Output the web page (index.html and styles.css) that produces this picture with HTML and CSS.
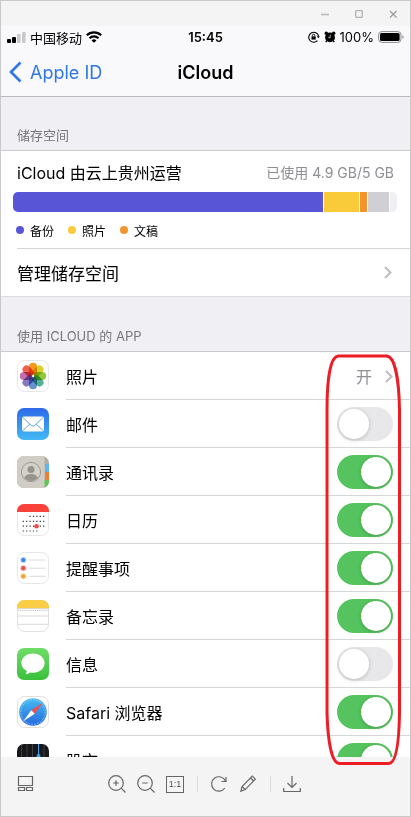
FILE: index.html
```html
<!DOCTYPE html>
<html lang="zh-CN">
<head>
    <meta charset="UTF-8">
    <meta name="viewport" content="width=device-width, initial-scale=1.0">
    <title>iCloud</title>
    <link rel="stylesheet" href="styles.css">
</head>
<body>
    <div class="window">
        <div class="titlebar">
            <button aria-label="最小化"><svg width="10" height="10" viewBox="0 0 10 10"><path d="M1 5.5h8" stroke="#b9b9b9" stroke-width="1.6"/></svg></button>
            <button aria-label="最大化"><svg width="10" height="10" viewBox="0 0 10 10"><rect x="1.7" y="1.7" width="6.6" height="6.6" rx="0.6" fill="none" stroke="#b3b3b3" stroke-width="1.3"/></svg></button>
            <button aria-label="关闭"><svg width="10" height="10" viewBox="0 0 10 10"><path d="M2 2l6.5 6.5M8.5 2L2 8.5" stroke="#999" stroke-width="1.1"/></svg></button>
        </div>

        <main class="screen">
            <div class="statusbar">
                <div class="status-left">
                    <svg width="19" height="12" viewBox="0 0 19 12">
                        <rect x="0" y="8" width="4" height="4" rx="1"/>
                        <rect x="5" y="6" width="4" height="6" rx="1"/>
                        <rect x="10" y="3" width="3.6" height="9" rx="1" fill="#c9c9cc"/>
                        <rect x="15" y="1" width="3.6" height="11" rx="1" fill="#c9c9cc"/>
                    </svg>
                    <span class="carrier">中国移动</span>
                    <svg width="16" height="12" viewBox="0 0 16 12" fill="none" stroke="#000" stroke-width="2.1">
                        <path d="M0.8 4.3a10.3 10.3 0 0 1 14.4 0"/>
                        <path d="M3.5 7.2a6.5 6.5 0 0 1 9 0"/>
                        <path d="M8 11.8L5.6 9.4a3.5 3.5 0 0 1 4.8 0z" fill="#000" stroke="none"/>
                    </svg>
                </div>
                <span class="time">15:45</span>
                <div class="status-right">
                    <svg width="12" height="12" viewBox="0 0 12 12" fill="none" stroke="#000" stroke-width="1.1">
                        <path d="M9.4 9.7A5 5 0 1 1 10.6 5"/>
                        <path d="M8.6 5.2h3.3l-1.6 2.1z" fill="#000" stroke="none"/>
                        <rect x="3.5" y="5.4" width="4.2" height="3.2" fill="#000" stroke="none"/>
                        <path d="M4.4 5.5V4.4a1.2 1.2 0 0 1 2.4 0v1.1" stroke-width="0.9"/>
                    </svg>
                    <svg width="12" height="12" viewBox="0 0 12 12">
                        <circle cx="6" cy="6.4" r="4.9"/>
                        <circle cx="2.3" cy="2.2" r="1.7"/>
                        <circle cx="9.7" cy="2.2" r="1.7"/>
                        <path d="M2.8 9.6l-1 1.5M9.2 9.6l1 1.5" stroke="#000" stroke-width="1.4"/>
                        <path d="M6.2 3.8v2.800H4.200" fill="none" stroke="#fff" stroke-width="0.7"/>
                    </svg>
                    <span class="percent">100%</span>
                    <svg width="26" height="12" viewBox="0 0 26 12">
                        <rect x="0.6" y="0.6" width="22.4" height="10.8" rx="3.2" fill="none" stroke="#8b8b8e"/>
                        <rect x="2" y="2" width="19.6" height="8" rx="1.5"/>
                        <path d="M24.4 4.3v3.4a1.8 1.8 0 0 0 0-3.4z" fill="#8b8b8e"/>
                    </svg>
                </div>
            </div>

            <header class="navbar">
                <a href="#" class="back">
                    <svg width="13" height="22" viewBox="0 0 13 22"><path d="M11.5 1.5L2 11l9.5 9.5" fill="none" stroke="#2f78e4" stroke-width="2.7"/></svg>
                    Apple ID
                </a>
                <h1>iCloud</h1>
            </header>

            <h2 class="section-title">储存空间</h2>
            <section class="storage">
                <div class="storage-head">
                    <span class="plan">iCloud 由云上贵州运营</span>
                    <span class="used">已使用 4.9 GB/5 GB</span>
                </div>
                <div class="usage">
                    <span class="backup" style="flex-grow: 310"></span>
                    <span class="photos" style="flex-grow: 35"></span>
                    <span class="docs" style="flex-grow: 7"></span>
                    <span class="other" style="flex-grow: 21"></span>
                    <span class="free" style="flex-grow: 7"></span>
                </div>
                <ul class="legend">
                    <li><i class="backup"></i>备份</li>
                    <li><i class="photos"></i>照片</li>
                    <li><i class="docs"></i>文稿</li>
                </ul>
                <a href="#" class="manage">
                    管理储存空间
                    <svg class="chevron" width="8" height="13" viewBox="0 0 8 13"><path d="M1 1l5.5 5.5L1 12"/></svg>
                </a>
            </section>

            <h2 class="section-title apps-title">使用 ICLOUD 的 APP</h2>
            <section class="apps">
                <a href="#" class="row">
                    <svg class="icon" viewBox="0 0 32 32">
                        <rect x="0.5" y="0.5" width="31" height="31" rx="7" fill="#fff" stroke="#e6e6e6"/>
                        <g class="petals">
                            <rect x="12" y="2.8" width="8" height="12.2" rx="4" fill="#f79a1c"/>
                            <rect x="12" y="2.8" width="8" height="12.2" rx="4" fill="#d9d327" transform="rotate(45 16 16)"/>
                            <rect x="12" y="2.8" width="8" height="12.2" rx="4" fill="#93c73d" transform="rotate(90 16 16)"/>
                            <rect x="12" y="2.8" width="8" height="12.2" rx="4" fill="#52b191" transform="rotate(135 16 16)"/>
                            <rect x="12" y="2.8" width="8" height="12.2" rx="4" fill="#6493d0" transform="rotate(180 16 16)"/>
                            <rect x="12" y="2.8" width="8" height="12.2" rx="4" fill="#8878c2" transform="rotate(225 16 16)"/>
                            <rect x="12" y="2.8" width="8" height="12.2" rx="4" fill="#c36fae" transform="rotate(270 16 16)"/>
                            <rect x="12" y="2.8" width="8" height="12.2" rx="4" fill="#ee6052" transform="rotate(315 16 16)"/>
                        </g>
                    </svg>
                    <span class="name">照片</span>
                    <span class="state">开</span>
                    <svg class="chevron" width="8" height="13" viewBox="0 0 8 13"><path d="M1 1l5.5 5.5L1 12"/></svg>
                </a>
                <label class="row">
                    <svg class="icon" viewBox="0 0 32 32">
                        <defs><linearGradient id="mail" x2="0" y2="1"><stop stop-color="#2c69e8"/><stop offset="1" stop-color="#43b9f5"/></linearGradient></defs>
                        <rect width="32" height="32" rx="7" fill="url(#mail)"/>
                        <rect x="5" y="8.5" width="22" height="15" rx="1.8" fill="#fff"/>
                        <path d="M5.6 9.2l8.6 8.2q1.8 1.6 3.6 0l8.6-8.2M5.6 22.8l7.2-6.7M26.4 22.8l-7.2-6.7" fill="none" stroke="#459bdb" stroke-width="0.9"/>
                    </svg>
                    <span class="name">邮件</span>
                    <input type="checkbox" class="switch">
                </label>
                <label class="row">
                    <svg class="icon" viewBox="0 0 32 32">
                        <rect width="32" height="32" rx="7" fill="#b2afa6"/>
                        <path d="M28 8h4v8h-4z" fill="#62b5ee"/>
                        <path d="M28 16h4v8h-4z" fill="#f07e35"/>
                        <path d="M27 24h5v1a7 7 0 0 1-5 6.7z" fill="#5fc657"/>
                        <path d="M7 0h20.5v32H7a7 7 0 0 1-7-7V7a7 7 0 0 1 7-7z" fill="#d0cec4"/>
                        <circle cx="14" cy="16" r="9.6" fill="#d3d1c8" stroke="#8f8c84" stroke-width="0.8"/>
                        <circle cx="14" cy="13.6" r="3.5" fill="#96938b"/>
                        <path d="M7.2 21.8c1.5-3 4-3.7 6.8-3.7s5.3.7 6.8 3.7a9 9 0 0 1-13.6 0z" fill="#96938b"/>
                    </svg>
                    <span class="name">通讯录</span>
                    <input type="checkbox" class="switch" checked>
                </label>
                <label class="row">
                    <svg class="icon" viewBox="0 0 32 32">
                        <rect x="0.5" y="0.5" width="31" height="31" rx="7" fill="#fff" stroke="#e6e6e6"/>
                        <path d="M0 8V7a7 7 0 0 1 7-7h18a7 7 0 0 1 7 7v1z" fill="#f9433a"/>
                        <g stroke="#333" stroke-width="1.2" stroke-dasharray="1.2 2.2">
                            <path d="M12.5 12.3h15"/>
                            <path d="M5.7 17.3h22"/>
                            <path d="M5.7 22.2h22"/>
                            <path d="M5.7 27h15"/>
                        </g>
                        <circle cx="19.5" cy="22.2" r="2.3" fill="#ee4944"/>
                    </svg>
                    <span class="name">日历</span>
                    <input type="checkbox" class="switch" checked>
                </label>
                <label class="row">
                    <svg class="icon" viewBox="0 0 32 32">
                        <rect x="0.5" y="0.5" width="31" height="31" rx="7" fill="#fff" stroke="#e6e6e6"/>
                        <path d="M12 8h16.5M12 16.2h16.5M12 24.3h16.5" stroke="#d2d2d4" stroke-width="0.8"/>
                        <g fill-opacity="0.3">
                            <circle cx="6.3" cy="8" r="3.2" fill="#3483e4"/>
                            <circle cx="6.3" cy="16.2" r="3.2" fill="#e8504c"/>
                            <circle cx="6.3" cy="24.3" r="3.2" fill="#eaa23a"/>
                        </g>
                        <circle cx="6.3" cy="8" r="2.1" fill="#3483e4"/>
                        <circle cx="6.3" cy="16.2" r="2.1" fill="#e0504c"/>
                        <circle cx="6.3" cy="24.3" r="2.1" fill="#eaa23a"/>
                    </svg>
                    <span class="name">提醒事项</span>
                    <input type="checkbox" class="switch" checked>
                </label>
                <label class="row">
                    <svg class="icon" viewBox="0 0 32 32">
                        <rect x="0.5" y="0.5" width="31" height="31" rx="7" fill="#fff" stroke="#e0e0e0"/>
                        <path d="M0 8.5V7a7 7 0 0 1 7-7h18a7 7 0 0 1 7 7v1.5z" fill="#f9cd45"/>
                        <path d="M0 8.7h32M0.5 16h31M0.5 24.3h31" stroke="#cfcfcf" stroke-width="0.8"/>
                        <path d="M1 10.6h30" stroke="#aaa" stroke-width="0.8" stroke-dasharray="0.9 1"/>
                    </svg>
                    <span class="name">备忘录</span>
                    <input type="checkbox" class="switch" checked>
                </label>
                <label class="row">
                    <svg class="icon" viewBox="0 0 32 32">
                        <defs><linearGradient id="messages" x2="0" y2="1"><stop stop-color="#70dd68"/><stop offset="1" stop-color="#3ac13b"/></linearGradient></defs>
                        <rect width="32" height="32" rx="7" fill="url(#messages)"/>
                        <path d="M16 5.500c6.600 0 11.600 4.200 11.600 9.600S22.600 24.800 16 24.800c-1.100 0-2.200-.1-3.200-.4-1.200 1-2.700 1.600-4.300 1.700.9-.9 1.400-1.900 1.300-3-3.200-1.700-5.400-4.600-5.400-8 0-5.400 5-9.600 11.600-9.600z" fill="#fff"/>
                    </svg>
                    <span class="name">信息</span>
                    <input type="checkbox" class="switch">
                </label>
                <label class="row">
                    <svg class="icon" viewBox="0 0 32 32">
                        <defs><linearGradient id="safari" x2="0" y2="1"><stop stop-color="#48bdf2"/><stop offset="1" stop-color="#2468dc"/></linearGradient></defs>
                        <rect x="0.5" y="0.5" width="31" height="31" rx="7" fill="#fff" stroke="#e0e0e0"/>
                        <circle cx="16" cy="16" r="13.8" fill="url(#safari)"/>
                        <circle cx="16" cy="16" r="12.3" fill="none" stroke="#a9d9f7" stroke-width="1.4" stroke-dasharray="0.5 1.1"/>
                        <path d="M25.8 6.7L14.3 14.3l3.4 3.4z" fill="#f1504b"/>
                        <path d="M6.2 25.3l8.1-11 3.4 3.4z" fill="#fff"/>
                    </svg>
                    <span class="name">Safari 浏览器</span>
                    <input type="checkbox" class="switch" checked>
                </label>
                <label class="row">
                    <svg class="icon" viewBox="0 0 32 32">
                        <rect width="32" height="32" rx="7" fill="#17171a"/>
                        <path d="M4.5 1v30M10 0v32M15.5 0v32M27 1v30" stroke="#48484c" stroke-width="0.8"/>
                        <path d="M21.5 0v32" stroke="#3c9ee8" stroke-width="1"/>
                        <circle cx="21.5" cy="12" r="2" fill="#3c9ee8"/>
                    </svg>
                    <span class="name">股市</span>
                    <input type="checkbox" class="switch" checked>
                </label>
            </section>
        </main>

        <footer class="toolbar">
            <button aria-label="缩略图">
                <svg width="18" height="18" viewBox="0 0 18 18"><path d="M1.5 1.5h14v9h-14zM1.5 12.5h6v3h-6zM9.5 12.5h6v3h-6z"/></svg>
            </button>
            <div class="tools">
                <button aria-label="放大">
                    <svg width="18" height="18" viewBox="0 0 18 18"><circle cx="8" cy="8" r="7.3"/><path d="M13.2 13.2l4.3 4.3M5.2 8h5.6M8 5.2v5.6"/></svg>
                </button>
                <button aria-label="缩小">
                    <svg width="18" height="18" viewBox="0 0 18 18"><circle cx="8" cy="8" r="7.3"/><path d="M13.2 13.2l4.3 4.3M5.2 8h5.6"/></svg>
                </button>
                <button aria-label="原始大小"><span class="ratio">1:1</span></button>
                <span class="separator"></span>
                <button aria-label="旋转">
                    <svg width="18" height="18" viewBox="0 0 18 18"><path d="M14.8 13A7.200 7.200 0 1 1 15.400 6M16 2v4.500h-4.500"/></svg>
                </button>
                <button aria-label="编辑">
                    <svg width="18" height="18" viewBox="0 0 18 18"><path d="M1.800 16.300l1.300-4.800L13.300 1.200l3 3L6.200 14.600zM11.500 3l3 3M3.100 11.500l3.100 3.100"/></svg>
                </button>
                <span class="separator"></span>
                <button aria-label="下载">
                    <svg width="18" height="18" viewBox="0 0 18 18"><path d="M9 1v11M4.500 8L9 12.500 13.500 8M0.700 13v3.500h16.600V13"/></svg>
                </button>
            </div>
        </footer>

        <!-- hand-drawn marker round the switches -->
        <svg class="marker" width="77" height="412" viewBox="0 0 77 412">
            <path d="M13 2H62C70 3 74 26 74.5 56V359C74 390 71 409 64 409.500H14C7 409 3 390 2 359V56C2 26 5 3 13 2z"/>
        </svg>
    </div>
</body>
</html>
```
FILE: styles.css
```css
* {
    box-sizing: border-box;
}

body {
    margin: 0;
    font-family: Inter, "Noto Sans CJK SC", sans-serif;
    color: #000;
}

h1, h2, ul {
    margin: 0;
    padding: 0;
    font-weight: 400;
}

a {
    color: inherit;
    text-decoration: none;
}

button {
    display: flex;
    align-items: center;
    justify-content: center;
    padding: 0;
    border: none;
    background: none;
    cursor: pointer;
}

svg {
    display: block;
    flex: none;
}

.window {
    position: relative;
    display: flex;
    flex-direction: column;
    height: 100vh;
    border: 1px solid #c9c9c9;
    background: #f4f4f4;
}

.titlebar {
    display: flex;
    flex: none;
    justify-content: flex-end;
    height: 25px;
}

.titlebar button {
    width: 34px;
}

.screen {
    flex: 1;
    min-height: 0;
    overflow: hidden;
    background: #fff;
}

/* status bar and navigation */
.statusbar {
    display: grid;
    grid-template-columns: 1fr auto 1fr;
    align-items: center;
    height: 22px;
    padding: 0 6px;
    background: #f9f9fb;
    font-size: 13px;
}

.status-left,
.status-right {
    display: flex;
    align-items: center;
    gap: 4px;
}

.status-right {
    justify-content: flex-end;
}

.time {
    font-weight: 600;
}

.navbar {
    display: grid;
    grid-template-columns: 1fr auto 1fr;
    align-items: center;
    height: 49px;
    padding: 0 8px;
    border-bottom: 1px solid #b9b9be;
    background: #f9f9fb;
}

.back {
    display: flex;
    align-items: center;
    gap: 8px;
    color: #2f78e4;
    font-size: 18px;
}

h1 {
    font-size: 18px;
    font-weight: 600;
}

/* storage */
.section-title {
    height: 54px;
    padding: 28px 16px 0;
    border-bottom: 1px solid #cbcbcf;
    background: #efeff4;
    color: #77777c;
    font-size: 13px;
    line-height: 20px;
}

.apps-title {
    height: 55px;
    padding-top: 29px;
}

.storage {
    padding-left: 12px;
    border-bottom: 1px solid #dcdce0;
}

.storage-head {
    display: flex;
    align-items: center;
    justify-content: space-between;
    height: 41px;
    padding: 0 16px 0 4px;
    font-size: 16px;
}

.used {
    color: #8e8e93;
    font-size: 14px;
}

.usage {
    display: flex;
    gap: 1px;
    height: 20px;
    margin-right: 13px;
    border-radius: 5px;
    overflow: hidden;
}

.backup { background: #5856d6; }
.photos { background: #f9cb3b; }
.docs { background: #f4942c; }
.other { background: #cfcfd4; }
.free { background: #efeff4; }

.legend {
    display: flex;
    align-items: center;
    gap: 14px;
    height: 36px;
    padding-left: 3px;
    font-size: 12px;
    list-style: none;
}

.legend li {
    display: flex;
    align-items: center;
    gap: 6px;
}

.legend i {
    width: 8px;
    height: 8px;
    border-radius: 50%;
}

.manage {
    display: flex;
    align-items: center;
    justify-content: space-between;
    height: 48px;
    margin-left: 4px;
    padding-right: 18px;
    border-top: 1px solid #d4d4d7;
    font-size: 17px;
}

.chevron {
    fill: none;
    stroke: #bdbdc1;
    stroke-width: 2;
}

/* app list */
.row {
    display: flex;
    align-items: center;
    height: 48px;
    padding-right: 17px;
    background: linear-gradient(#d6d6d8, #d6d6d8) 65px 100% / 100% 1px no-repeat;
}

.icon {
    width: 32px;
    height: 32px;
    margin: 0 17px 0 16px;
}

.petals rect {
    mix-blend-mode: multiply;
}

.name {
    flex: 1;
    font-size: 16px;
}

.state {
    margin-right: 13px;
    color: #8e8e93;
    font-size: 16px;
}

.switch {
    appearance: none;
    width: 56px;
    height: 34px;
    margin: 0;
    padding: 2px;
    border-radius: 17px;
    background: #e8e8ea;
    cursor: pointer;
}

.switch::before {
    content: "";
    display: block;
    width: 30px;
    height: 30px;
    border-radius: 50%;
    background: #fff;
    box-shadow: 0 1px 4px rgba(0, 0, 0, 0.2);
}

.switch:checked {
    background: #55c45e;
}

.switch:checked::before {
    margin-left: auto;
}

/* viewer toolbar */
.toolbar {
    display: grid;
    flex: none;
    grid-template-columns: 1fr auto 1fr;
    align-items: center;
    height: 59px;
    padding: 0 12px 5px 10px;
}

.toolbar button {
    width: 29px;
    height: 29px;
}

.toolbar svg {
    fill: none;
    stroke: #666;
    stroke-width: 1.2;
}

.tools {
    display: flex;
    align-items: center;
}

.ratio {
    width: 18px;
    border: 1px solid #666;
    color: #555;
    font-size: 9px;
    line-height: 15px;
}

.separator {
    width: 1px;
    height: 16px;
    margin: 0 7px;
    background: #dcdcdc;
}

.marker {
    position: absolute;
    top: 353px;
    right: 8px;
    fill: none;
    stroke: #ee1c25;
    stroke-width: 3;
    pointer-events: none;
}
```
